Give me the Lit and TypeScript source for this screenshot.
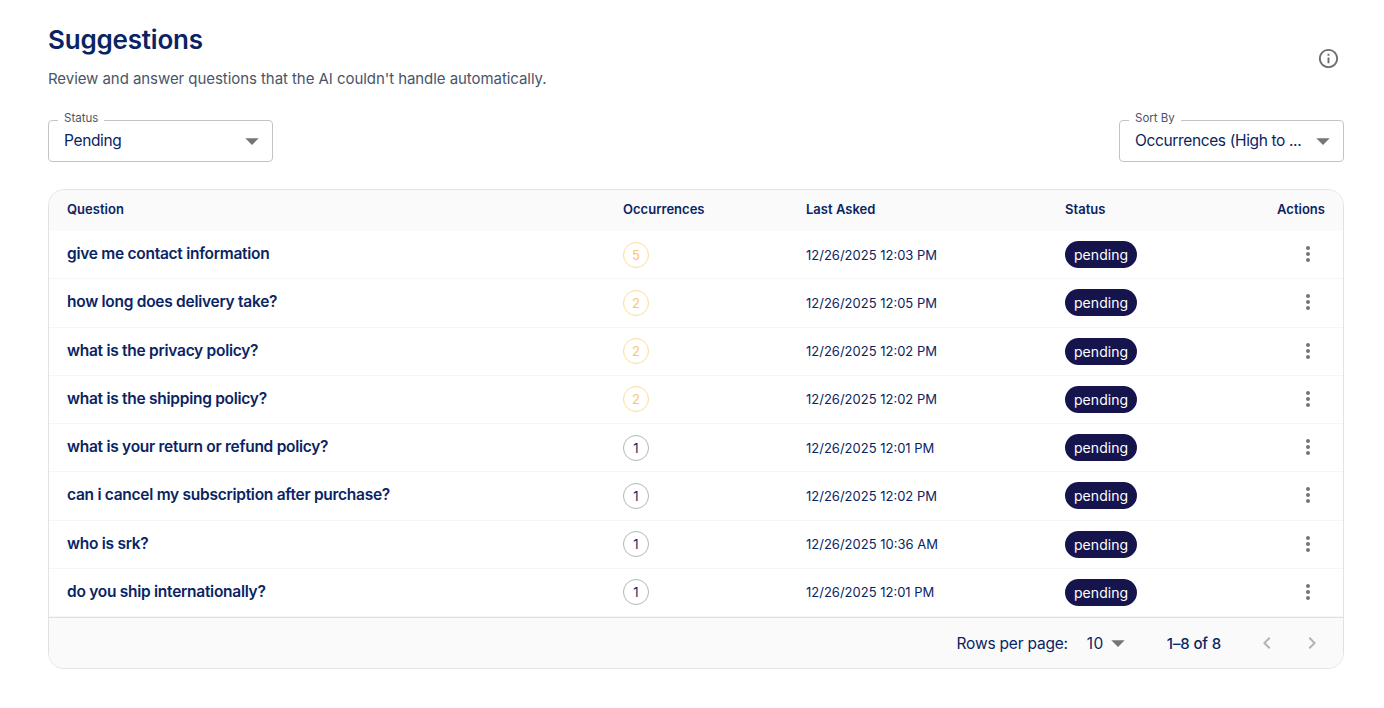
import { LitElement, html, css } from 'lit';
import { customElement } from 'lit/decorators.js';

const rows = [
  { q: 'give me contact information', n: 5, at: '12/26/2025 12:03 PM' },
  { q: 'how long does delivery take?', n: 2, at: '12/26/2025 12:05 PM' },
  { q: 'what is the privacy policy?', n: 2, at: '12/26/2025 12:02 PM' },
  { q: 'what is the shipping policy?', n: 2, at: '12/26/2025 12:02 PM' },
  { q: 'what is your return or refund policy?', n: 1, at: '12/26/2025 12:01 PM' },
  { q: 'can i cancel my subscription after purchase?', n: 1, at: '12/26/2025 12:02 PM' },
  { q: 'who is srk?', n: 1, at: '12/26/2025 10:36 AM' },
  { q: 'do you ship internationally?', n: 1, at: '12/26/2025 12:01 PM' },
];

const caret = html`<svg class="caret" viewBox="0 0 24 24"><path d="M7 10l5 5 5-5z"></path></svg>`;

@customElement('app-root')
export class AppRoot extends LitElement {
  static styles = css`
    :host {
      display: block;
      box-sizing: border-box;
      height: 708px;
      padding: 24px 40px 0 48px;
      background: #fff;
      color: #0a2463;
      font-family: Inter, 'Noto Sans', sans-serif;
    }
    * {
      box-sizing: border-box;
    }

    .head {
      display: flex;
      justify-content: space-between;
      align-items: flex-start;
      height: 72px;
    }
    h1 {
      margin: 0;
      font-size: 26px;
      line-height: 32px;
      font-weight: 600;
      letter-spacing: -0.2px;
    }
    .sub {
      margin: 13px 0 0;
      font-size: 15px;
      line-height: 20px;
      color: #4a5568;
      letter-spacing: -0.06px;
    }
    .info {
      width: 23px;
      height: 23px;
      margin: 22.5px 4px 0 0;
      fill: #6f6f6f;
    }

    .filters {
      display: flex;
      justify-content: space-between;
      margin-top: 24px;
    }
    .select {
      position: relative;
      display: flex;
      align-items: center;
      justify-content: space-between;
      width: 225px;
      height: 42px;
      padding: 0 15px 2px;
      border: 1px solid #c4c4c4;
      border-radius: 4px;
      font-size: 15.5px;
      letter-spacing: -0.36px;
      white-space: nowrap;
    }
    .select label {
      position: absolute;
      top: -10px;
      left: 9px;
      padding: 0 6px;
      background: #fff;
      font-size: 11.5px;
      line-height: 14px;
      letter-spacing: 0;
      color: #4a5568;
    }
    .caret {
      width: 32px;
      height: 32px;
      fill: #757575;
      flex: none;
    }
    .select .caret {
      margin-right: -11px;
      margin-bottom: -2px;
    }

    .card {
      margin-top: 27px;
      width: 1296px;
      height: 480px;
      border: 1px solid #e2e2e6;
      border-radius: 16px;
      overflow: hidden;
    }
    .row {
      display: grid;
      grid-template-columns: 556px 183px 259px 196px 100px;
      align-items: center;
      height: 48.25px;
      border-bottom: 1px solid #f6f6f7;
    }
    .row:last-of-type {
      border-bottom: none;
    }
    .row > div {
      padding: 0 18px;
    }
    .row.top {
      height: 41px;
      padding-bottom: 3px;
      background: #fafafa;
      border-bottom: none;
      font-size: 13px;
      font-weight: 600;
      letter-spacing: 0.02px;
    }
    .end {
      text-align: right;
    }
    .q {
      font-size: 15.5px;
      line-height: 20px;
      font-weight: 600;
      letter-spacing: -0.27px;
      margin-top: -1px;
    }
    .at {
      font-size: 13px;
    }
    .count {
      display: flex;
      align-items: center;
      justify-content: center;
      width: 26px;
      height: 26px;
      border: 1px solid #b5b5b9;
      border-radius: 50%;
      font-size: 13px;
      color: #0a2463;
    }
    .count.warn {
      border-color: #fddc9a;
      color: #fbc56a;
    }
    .chip {
      display: inline-flex;
      align-items: center;
      height: 27px;
      padding: 0 9px;
      border-radius: 14px;
      background: #16144d;
      color: #fff;
      font-size: 14px;
      letter-spacing: 0.05px;
      vertical-align: middle;
    }
    .more {
      display: block;
      width: 24px;
      height: 24px;
      margin: -1px 5px 0 auto;
      fill: #757575;
    }

    .foot {
      display: flex;
      align-items: center;
      justify-content: flex-end;
      height: 51px;
      padding-right: 19px;
      background: #fafafa;
      border-top: 1px solid #dfdfe3;
      font-size: 15.5px;
      letter-spacing: -0.2px;
    }
    .per {
      display: flex;
      align-items: center;
      margin-left: 19px;
      width: 47px;
      font-size: 15.5px;
      font-weight: 400;
      letter-spacing: 0.4px;
    }
    .per .caret {
      margin-left: -2px;
      flex: none;
    }
    .range {
      margin-left: 33px;
      font-size: 15px;
      font-weight: 500;
      letter-spacing: -0.15px;
    }
    .nav {
      width: 24px;
      height: 24px;
      fill: #b3b3b3;
    }
    .nav.prev {
      margin-left: 34px;
    }
    .nav.next {
      margin-left: 21px;
    }
  `;

  render() {
    return html`
      <div class="head">
        <div>
          <h1>Suggestions</h1>
          <p class="sub">Review and answer questions that the AI couldn't handle automatically.</p>
        </div>
        <svg class="info" viewBox="0 0 24 24">
          <path d="M11 7h2v2h-2zm0 4h2v6h-2zm1-9C6.48 2 2 6.48 2 12s4.48 10 10 10 10-4.48 10-10S17.52 2 12 2zm0 18c-4.41 0-8-3.59-8-8s3.59-8 8-8 8 3.59 8 8-3.59 8-8 8z"></path>
        </svg>
      </div>

      <div class="filters">
        <div class="select"><label>Status</label><span>Pending</span>${caret}</div>
        <div class="select"><label>Sort By</label><span>Occurrences (High to ...</span>${caret}</div>
      </div>

      <div class="card">
        <div class="row top">
          <div>Question</div>
          <div>Occurrences</div>
          <div>Last Asked</div>
          <div>Status</div>
          <div class="end">Actions</div>
        </div>
        ${rows.map(
          (r) => html`
            <div class="row">
              <div class="q">${r.q}</div>
              <div><span class="count ${r.n > 1 ? 'warn' : ''}">${r.n}</span></div>
              <div class="at">${r.at}</div>
              <div><span class="chip">pending</span></div>
              <div>
                <svg class="more" viewBox="0 0 24 24">
                  <path d="M12 8c1.1 0 2-.9 2-2s-.9-2-2-2-2 .9-2 2 .9 2 2 2zm0 2c-1.1 0-2 .9-2 2s.9 2 2 2 2-.9 2-2-.9-2-2-2zm0 6c-1.1 0-2 .9-2 2s.9 2 2 2 2-.9 2-2-.9-2-2-2z"></path>
                </svg>
              </div>
            </div>
          `
        )}
        <div class="foot">
          <span>Rows per page:</span>
          <span class="per">10${caret}</span>
          <span class="range">1–8 of 8</span>
          <svg class="nav prev" viewBox="0 0 24 24"><path d="M15.41 7.41 14 6l-6 6 6 6 1.41-1.41L10.83 12z"></path></svg>
          <svg class="nav next" viewBox="0 0 24 24"><path d="M10 6 8.59 7.41 13.17 12l-4.58 4.59L10 18l6-6z"></path></svg>
        </div>
      </div>
    `;
  }
}
